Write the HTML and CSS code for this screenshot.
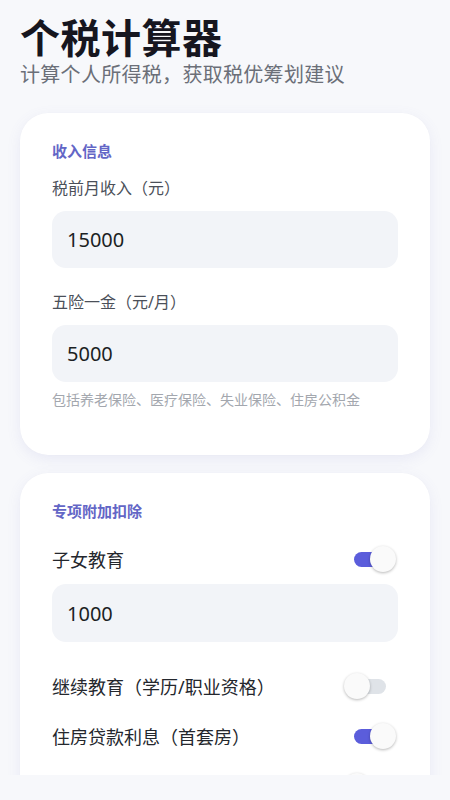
FILE: index.html
```html
<!DOCTYPE html>
<html lang="zh-CN">
<head>
<meta charset="utf-8">
<title>个税计算器</title>
<link rel="stylesheet" href="styles.css">
</head>
<body>
<div class="app">
  <header class="header">
    <h1 class="title">个税计算器</h1>
    <p class="subtitle">计算个人所得税，获取税优筹划建议</p>
  </header>

  <section class="card card-income">
    <div class="section-label">收入信息</div>
    <div class="field-label">税前月收入（元）</div>
    <div class="input">15000</div>
    <div class="field-label second">五险一金（元/月）</div>
    <div class="input">5000</div>
    <div class="hint">包括养老保险、医疗保险、失业保险、住房公积金</div>
  </section>

  <section class="card card-deduct">
    <div class="section-label">专项附加扣除</div>
    <div class="row first">
      <span class="row-label">子女教育</span>
      <span class="switch on"><span class="thumb"></span></span>
    </div>
    <div class="input small-gap">1000</div>
    <div class="row after-input">
      <span class="row-label">继续教育（学历/职业资格）</span>
      <span class="switch"><span class="thumb"></span></span>
    </div>
    <div class="row">
      <span class="row-label">住房贷款利息（首套房）</span>
      <span class="switch on"><span class="thumb"></span></span>
    </div>
    <div class="row row-end">
      <span class="switch"><span class="thumb"></span></span>
    </div>
  </section>
</div>
</body>
</html>
```
FILE: styles.css
```css
* { box-sizing: border-box; }
html, body {
  margin: 0;
  padding: 0;
  background: #f7f8fb;
  height: 800px;
  overflow: hidden;
}
body {
  font-family: "Noto Sans", "Noto Sans CJK SC", sans-serif;
  color: #1f2329;
}
.app {
  height: 775px;
  overflow: hidden;
  padding: 15px 20px 0;
  display: flex;
  flex-direction: column;
}
.header { margin-bottom: 24px; }
.title {
  margin: 0;
  font-size: 40px;
  line-height: 46px;
  font-weight: 700;
  color: #16161f;
  letter-spacing: 0.5px;
}
.subtitle {
  margin: 0;
  font-size: 20px;
  line-height: 28px;
  color: #6b6f78;
  letter-spacing: 0.3px;
}
.card {
  flex-shrink: 0;
  background: #ffffff;
  border-radius: 28px;
  padding: 28px 32px 45px;
  box-shadow: 0 4px 14px rgba(110, 110, 200, 0.10), 0 0 1px rgba(0, 0, 0, 0.04);
  display: flex;
  flex-direction: column;
}
.card-deduct { margin-top: 18px; padding-bottom: 30px; }
.section-label {
  font-size: 15px;
  line-height: 20px;
  font-weight: 700;
  color: #6366c6;
}
.field-label {
  margin-top: 15px;
  font-size: 16px;
  line-height: 24px;
  color: #4b5059;
}
.field-label.second { margin-top: 22px; }
.input {
  margin-top: 11px;
  height: 57px;
  border-radius: 14px;
  background: #f2f4f8;
  padding-left: 15px;
  display: flex;
  align-items: center;
  font-size: 20px;
  color: #1c1f24;
}
.input.small-gap { margin-top: 7px; height: 58px; }
.hint {
  margin-top: 8px;
  font-size: 14px;
  line-height: 20px;
  color: #a3a7ae;
}
.row {
  height: 36px;
  margin-top: 14px;
  display: flex;
  align-items: center;
  justify-content: space-between;
}
.row.row-end { justify-content: flex-end; }
.row.first { margin-top: 20px; }
.row.after-input { margin-top: 26px; }
.row-label {
  font-size: 18px;
  color: #24272d;
}
.switch {
  position: relative;
  width: 32px;
  height: 15px;
  border-radius: 8px;
  background: #dfe3e8;
  margin-right: 12px;
}
.switch.on { background: #5b5ddb; }
.thumb {
  position: absolute;
  top: -6px;
  left: -10px;
  width: 26px;
  height: 26px;
  border-radius: 50%;
  background: #fafafa;
  box-shadow: 0 1px 3px rgba(0, 0, 0, 0.28);
}
.switch.on .thumb { left: 16px; }
```
